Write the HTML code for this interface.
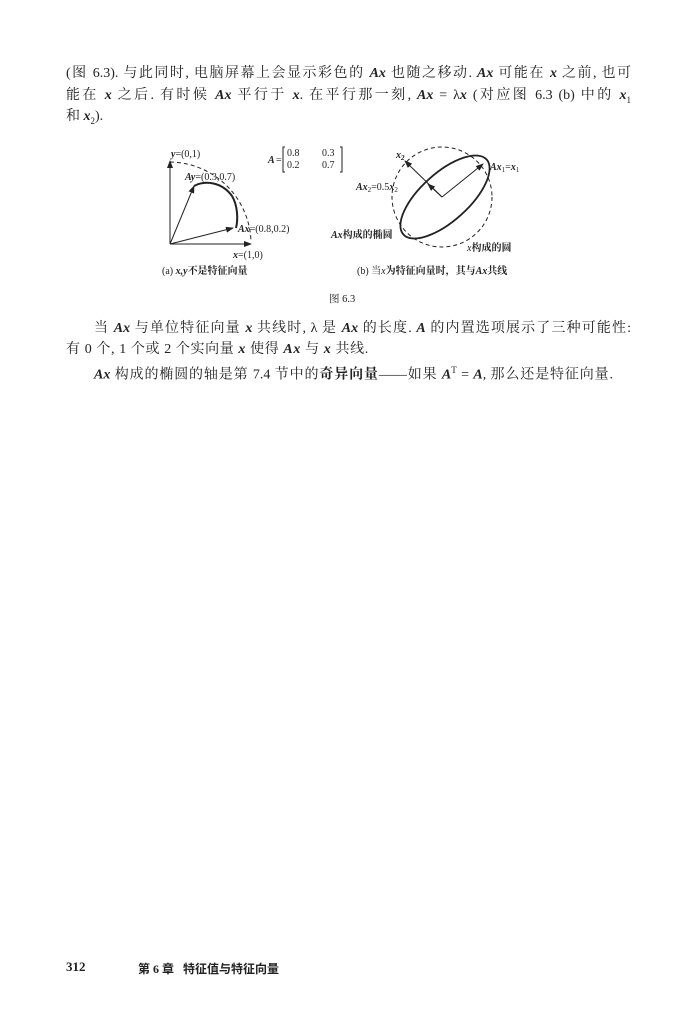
<!DOCTYPE html>
<html><head><meta charset="utf-8"><style>
body{margin:0;width:687px;height:1035px;background:#fff;position:relative;overflow:hidden;font-family:"Liberation Serif","Noto Serif CJK SC",serif;color:#222}
.l{position:absolute;left:66px;font-size:14px;white-space:nowrap;line-height:16px}
.j{white-space:normal;text-align:justify;text-align-last:justify}
b.m{font-style:italic;font-weight:bold}
i{font-style:italic}
</style></head><body>
<div class="l j" style="top:66px;width:565px">(图 6.3). 与此同时, 电脑屏幕上会显示彩色的 <b class="m">Ax</b> 也随之移动. <b class="m">Ax</b> 可能在 <b class="m">x</b> 之前, 也可</div>
<div class="l j" style="top:88px;width:565px">能在 <b class="m">x</b> 之后. 有时候 <b class="m">Ax</b> 平行于 <b class="m">x</b>. 在平行那一刻, <b class="m">Ax</b> = λ<b class="m">x</b> (对应图 6.3 (b) 中的 <b class="m">x</b><sub style="font-size:9px">1</sub></div>
<div class="l" style="top:109px">和 <b class="m">x</b><sub style="font-size:9px">2</sub>).</div>

<svg style="position:absolute;left:0;top:0" width="687" height="320" font-family="Liberation Serif,Noto Serif CJK SC,serif" font-size="10" fill="#222">
<defs><marker id="a" markerWidth="8" markerHeight="6" refX="7" refY="3" orient="auto"><path d="M0,0L8,3L0,6z" fill="#222"/></marker></defs>
<g stroke="#222" fill="none">
<line x1="170" y1="244" x2="170" y2="161" marker-end="url(#a)"/>
<line x1="170" y1="244" x2="251" y2="244" marker-end="url(#a)"/>
<path d="M170,162 A82,82 0 0 1 251,242" stroke-dasharray="4,3"/>
<line x1="170" y1="244" x2="194" y2="186" marker-end="url(#a)"/>
<line x1="170" y1="244" x2="233" y2="228" marker-end="url(#a)"/>
<path d="M194,186 C205,180 222,182 232,196 C238,206 238,220 236,228" stroke-width="2"/>
<circle cx="442" cy="197" r="50" stroke-dasharray="4,3"/>
<ellipse cx="445" cy="197" rx="56" ry="24" transform="rotate(-42 445 197)" stroke-width="1.8"/>
<line x1="442" y1="197" x2="483" y2="164" marker-end="url(#a)"/>
<line x1="442" y1="197" x2="405" y2="161" marker-end="url(#a)"/>
<line x1="442" y1="197" x2="428" y2="184" marker-end="url(#a)"/>
<path d="M285,147 h-2 v25 h2 M340,147 h2 v25 h-2"/>
</g>
<text x="171" y="157"><tspan font-weight="bold" font-style="italic">y</tspan>=(0,1)</text>
<text x="185" y="180"><tspan font-weight="bold" font-style="italic">Ay</tspan>=(0.3,0.7)</text>
<text x="238" y="232"><tspan font-weight="bold" font-style="italic">Ax</tspan>=(0.8,0.2)</text>
<text x="233" y="258"><tspan font-weight="bold" font-style="italic">x</tspan>=(1,0)</text>
<text x="268" y="163" font-weight="bold" font-style="italic">A</text><text x="276" y="163">=</text>
<text x="287" y="156">0.8</text><text x="322" y="156">0.3</text>
<text x="287" y="168">0.2</text><text x="322" y="168">0.7</text>
<text x="396" y="158" font-weight="bold" font-style="italic">x<tspan font-size="7" dy="2">2</tspan></text>
<text x="490" y="170"><tspan font-weight="bold" font-style="italic">Ax</tspan><tspan font-size="7" dy="2">1</tspan><tspan dy="-2">=</tspan><tspan font-weight="bold" font-style="italic">x</tspan><tspan font-size="7" dy="2">1</tspan></text>
<text x="356" y="190"><tspan font-weight="bold" font-style="italic">Ax</tspan><tspan font-size="7" dy="2">2</tspan><tspan dy="-2">=0.5</tspan><tspan font-weight="bold" font-style="italic">x</tspan><tspan font-size="7" dy="2">2</tspan></text>
<text x="331" y="238"><tspan font-weight="bold" font-style="italic">Ax</tspan><tspan font-weight="bold">构成的椭圆</tspan></text>
<text x="467" y="251"><tspan font-style="italic">x</tspan><tspan font-weight="bold">构成的圆</tspan></text>
<text x="162" y="274">(a) <tspan font-style="italic" font-weight="bold">x,y</tspan><tspan font-weight="bold">不是特征向量</tspan></text>
<text x="357" y="274">(b) 当<tspan font-style="italic">x</tspan><tspan font-weight="bold">为特征向量时，其与</tspan><tspan font-weight="bold" font-style="italic">Ax</tspan><tspan font-weight="bold">共线</tspan></text>
<text x="329" y="302" font-size="10.5">图 6.3</text>
</svg>

<div class="l j" style="top:321px;left:94px;width:537px">当 <b class="m">Ax</b> 与单位特征向量 <b class="m">x</b> 共线时, λ 是 <b class="m">Ax</b> 的长度. <b class="m">A</b> 的内置选项展示了三种可能性:</div>
<div class="l" style="top:342px;letter-spacing:0.6px">有 0 个, 1 个或 2 个实向量 <b class="m">x</b> 使得 <b class="m">Ax</b> 与 <b class="m">x</b> 共线.</div>
<div class="l j" style="top:362px;left:94px;width:519px"><b class="m">Ax</b> 构成的椭圆的轴是第 7.4 节中的<b>奇异向量</b>——如果 <b class="m">A</b><sup style="font-size:9px">T</sup> = <b class="m">A</b>, 那么还是特征向量.</div>

<div style="position:absolute;left:66px;top:959px;font-size:13px;font-weight:bold">312</div>
<div style="position:absolute;left:138px;top:960px;font-size:12px;font-weight:bold;font-family:'Liberation Serif','Noto Sans CJK SC',serif">第 6 章 &nbsp;&nbsp;特征值与特征向量</div>
</body></html>
